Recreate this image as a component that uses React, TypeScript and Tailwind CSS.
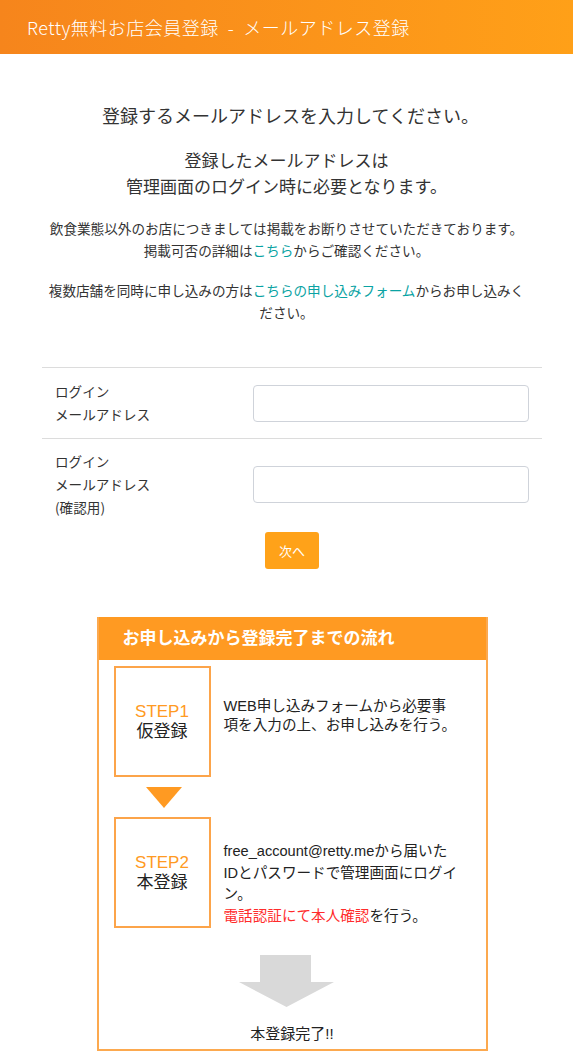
export default function App() {
  return (
    <div className="min-h-[1058px] bg-white text-[#333] font-['Noto_Sans_CJK_JP',sans-serif]">
      {/* header */}
      <header className="flex h-[54px] items-center bg-gradient-to-r from-[#f6851c] to-[#ffa018] px-[27px]">
        <h1 className="whitespace-pre text-[18px] font-light tracking-[0.5px] text-white">Retty無料お店会員登録  -  メールアドレス登録</h1>
      </header>

      {/* intro */}
      <div className="flex flex-col items-center px-[38px] text-center">
        <p className="ml-[8px] mt-[48px] text-[18px] leading-[26px]">登録するメールアドレスを入力してください。</p>
        <p className="mt-[19px] text-[17px] leading-[26px]">
          登録したメールアドレスは
          <br />
          管理画面のログイン時に必要となります。
        </p>
        <p className="mt-[18px] text-[13.6px] leading-[22px]">
          飲食業態以外のお店につきましては掲載をお断りさせていただきております。
          <br />
          掲載可否の詳細は<a className="text-[#0aa3a3]">こちら</a>からご確認ください。
        </p>
        <p className="mt-[18px] text-[13.6px] leading-[22px]">
          複数店舗を同時に申し込みの方は<a className="text-[#0aa3a3]">こちらの申し込みフォーム</a>からお申し込みく
          <br />
          ださい。
        </p>
      </div>

      {/* form */}
      <div className="ml-[42px] mt-[44px] w-[500px]">
        <div className="flex items-center justify-between border-t border-[#dcdcdc] px-[13px] py-[12px]">
          <div className="text-[13.6px] leading-[23px]">
            ログイン
            <br />
            メールアドレス
          </div>
          <input className="h-[37px] w-[276px] rounded-[4px] border border-[#cfd3da] bg-white" />
        </div>
        <div className="flex items-center justify-between border-t border-[#dcdcdc] px-[13px] py-[11px]">
          <div className="text-[13.6px] leading-[23px]">
            ログイン
            <br />
            メールアドレス
            <br />
            (確認用)
          </div>
          <input className="h-[37px] w-[276px] rounded-[4px] border border-[#cfd3da] bg-white" />
        </div>
        <div className="mt-[2px] flex justify-center">
          <button type="button" className="h-[37px] w-[54px] rounded-[3px] bg-[#ffa219] text-[13px] text-white">
            次へ
          </button>
        </div>

        {/* flow */}
        <div className="mx-auto mt-[48px] w-[391px] border-2 border-t-0 border-[#fca94f] font-['Liberation_Sans','Noto_Sans_CJK_JP',sans-serif] text-[#222]">
          <div className="flex h-[43px] items-center bg-[#ff9a22] px-[24px] text-[17px] font-bold text-white">
            お申し込みから登録完了までの流れ
          </div>
          <div className="px-[15px] pt-[6px]">
            <div className="flex gap-[13px]">
              <div className="flex h-[111px] w-[97px] shrink-0 flex-col items-center justify-center border-2 border-[#fca44a] leading-[20px]">
                <span className="text-[17px] text-[#ff9a22]">STEP1</span>
                <span className="text-[17px]">仮登録</span>
              </div>
              <p className="mt-[31px] whitespace-nowrap text-[14.6px] leading-[19px]">
                WEB申し込みフォームから必要事
                <br />
                項を入力の上、お申し込みを行う。
              </p>
            </div>
            <div className="ml-[32px] mt-[10px] h-0 w-0 border-l-[18px] border-r-[18px] border-t-[21px] border-l-transparent border-r-transparent border-t-[#ff9a22]" />
            <div className="mt-[9px] flex gap-[13px]">
              <div className="flex h-[111px] w-[97px] shrink-0 flex-col items-center justify-center border-2 border-[#fca44a] leading-[20px]">
                <span className="text-[17px] text-[#ff9a22]">STEP2</span>
                <span className="text-[17px]">本登録</span>
              </div>
              <p className="mt-[24px] whitespace-nowrap text-[14.6px] leading-[21.5px]">
                free_account@retty.meから届いた
                <br />
                IDとパスワードで管理画面にログイ
                <br />
                ン。
                <br />
                <span className="text-[#ff2b2b]">電話認証にて本人確認</span>を行う。
              </p>
            </div>
            <div className="mt-[27px] flex flex-col items-center pb-[5px]">
              <svg width="95" height="52" viewBox="0 0 95 52" className="mr-[12px]">
                <path d="M21 0H72V27H95L47.5 52L0 27H21Z" fill="#d9d9d9" />
              </svg>
              <span className="mt-[17px] text-[15px] leading-[20px]">本登録完了!!</span>
            </div>
          </div>
        </div>
      </div>
    </div>
  );
}
